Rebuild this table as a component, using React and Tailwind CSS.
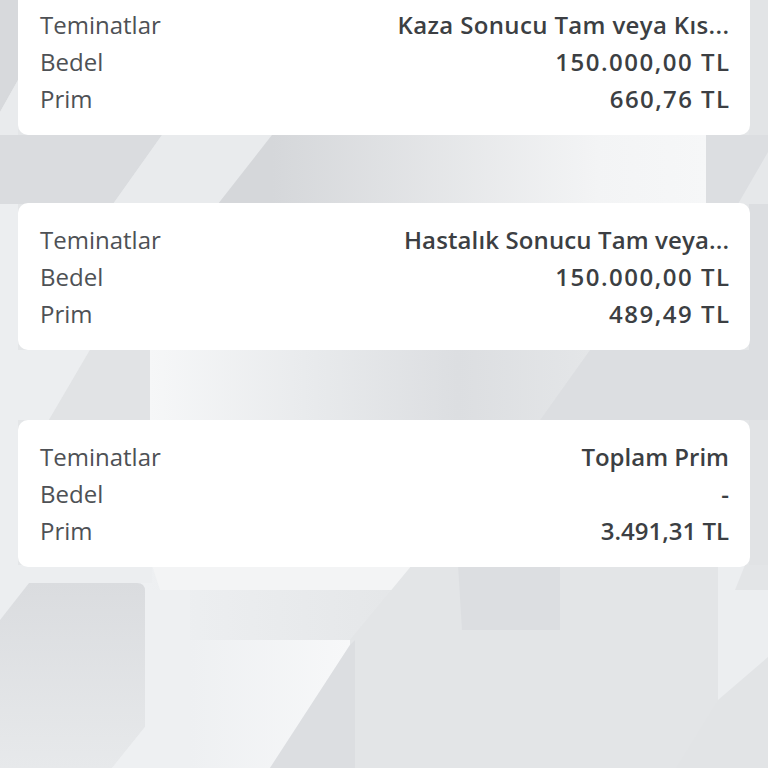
import React from 'react';

const cards = [
  {
    teminat: { text: 'Kaza Sonucu Tam veya Kıs...', cls: 'tracking-[0.35px] -mr-[0.35px]' },
    bedel: { text: '150.000,00 TL', cls: 'tracking-[1.5px] -mr-[1.5px]' },
    prim: { text: '660,76 TL', cls: 'tracking-[1.4px] -mr-[1.4px]' },
  },
  {
    teminat: { text: 'Hastalık Sonucu Tam veya...', cls: 'tracking-[0.12px] -mr-[0.12px]' },
    bedel: { text: '150.000,00 TL', cls: 'tracking-[1.5px] -mr-[1.5px]' },
    prim: { text: '489,49 TL', cls: 'tracking-[1.5px] -mr-[1.5px]' },
  },
  {
    teminat: { text: 'Toplam Prim', cls: '' },
    bedel: { text: '-', cls: '' },
    prim: { text: '3.491,31 TL', cls: '' },
  },
];

// decorative geometric backdrop
const Backdrop = () => (
  <svg className="absolute inset-0 w-full h-full" viewBox="0 0 768 768" preserveAspectRatio="none">
    <defs>
      <linearGradient id="g1" x1="272" x2="706" y1="0" y2="0" gradientUnits="userSpaceOnUse">
        <stop offset="0" stopColor="#d5d7da" />
        <stop offset="0.75" stopColor="#f3f4f5" />
        <stop offset="1" stopColor="#f6f7f8" />
      </linearGradient>
      <linearGradient id="g2" x1="150" x2="590" y1="0" y2="0" gradientUnits="userSpaceOnUse">
        <stop offset="0" stopColor="#f6f7f8" />
        <stop offset="0.35" stopColor="#e9ebed" />
        <stop offset="0.7" stopColor="#dcdee1" />
        <stop offset="1" stopColor="#e4e6e8" />
      </linearGradient>
      <linearGradient id="g3" x1="145" x2="412" y1="0" y2="0" gradientUnits="userSpaceOnUse">
        <stop offset="0" stopColor="#eef0f2" />
        <stop offset="1" stopColor="#e4e6e8" />
      </linearGradient>
      <linearGradient id="g4" x1="0" x2="0" y1="583" y2="768" gradientUnits="userSpaceOnUse">
        <stop offset="0" stopColor="#dadcdf" />
        <stop offset="1" stopColor="#e7e9eb" />
      </linearGradient>
      <linearGradient id="g5" x1="190" x2="350" y1="0" y2="0" gradientUnits="userSpaceOnUse">
        <stop offset="0" stopColor="#eef0f2" />
        <stop offset="1" stopColor="#f7f8f9" />
      </linearGradient>
    </defs>
    <rect width="768" height="768" fill="#e4e6e8" />
    {/* top strips */}
    <polygon points="0,0 18,0 18,80 0,112" fill="#d7d9dc" />
    <polygon points="0,112 18,80 18,135 0,135" fill="#e9ebed" />
    <polygon points="749,0 768,0 768,135 749,135" fill="#e2e4e6" />
    {/* first gap */}
    <polygon points="0,135 162,135 113,204 0,204" fill="#dadcdf" />
    <polygon points="162,135 272,135 218,204 113,204" fill="#e9ebed" />
    <polygon points="272,135 706,135 706,204 218,204" fill="url(#g1)" />
    <polygon points="706,135 768,135 768,204 706,204" fill="#dcdee1" />
    <polygon points="738,204 768,152 768,204" fill="#e6e8ea" />
    {/* middle strips */}
    <polygon points="0,204 18,204 18,420 0,420" fill="#eceef0" />
    <polygon points="749,204 768,204 768,420 749,420" fill="#dcdee1" />
    <polygon points="749,420 768,385 768,420" fill="#e6e8ea" />
    {/* second gap */}
    <polygon points="0,350 90,350 49,420 0,420" fill="#eceef0" />
    <polygon points="90,350 150,350 150,420 49,420" fill="#e1e3e5" />
    <polygon points="150,350 590,350 540,420 150,420" fill="url(#g2)" />
    <polygon points="590,350 768,350 768,420 540,420" fill="#dcdee1" />
    <polygon points="0,420 18,420 18,565 0,565" fill="#eceef0" />
    <polygon points="749,420 768,420 768,565 749,565" fill="#e1e3e5" />
    {/* bottom */}
    <polygon points="0,565 412,565 350,640 350,768 0,768" fill="url(#g3)" />
    <polygon points="0,565 152,565 152,583 29,583 0,620" fill="#eceef0" />
    <polygon points="152,565 412,565 400,590 160,590" fill="#f3f4f5" />
    <path d="M29,583 L137,583 Q145,583 145,591 L145,727 L112,768 L0,768 L0,620 Z" fill="url(#g4)" />
    <polygon points="145,590 190,590 190,768 112,768 145,727" fill="#eef0f2" />
    <polygon points="190,640 350,640 350,645 270,768 190,768" fill="url(#g5)" />
    <polygon points="350,645 355,640 355,768 270,768" fill="#dcdee1" />
    <polygon points="412,565 718,565 718,768 355,768 355,640 350,640" fill="#e3e5e7" />
    <polygon points="458,565 560,565 560,630 462,630" fill="#dcdee1" />
    <polygon points="718,565 768,565 768,768 718,768" fill="#eceef0" />
    <polygon points="745,565 768,565 768,590 735,590" fill="#e3e5e7" />
    <polygon points="768,657 768,768 676,768 718,700" fill="#e2e4e6" />
  </svg>
);

const Row = ({ label, value }) => (
  <div className="flex items-center justify-between h-[37px]">
    <span className="text-[24px] text-[#4e5155] whitespace-nowrap">{label}</span>
    <span className={`text-[24px] font-semibold text-[#3c3f43] whitespace-nowrap ${value.cls}`}>{value.text}</span>
  </div>
);

export default function App() {
  return (
    <div className="relative w-[768px] h-[768px] overflow-hidden" style={{ fontFamily: '"Open Sans", "Liberation Sans", sans-serif' }}>
      <Backdrop />
      <div className="relative flex flex-col px-[18px] -mt-[12px]">
        {cards.map((c, i) => (
          <div
            key={i}
            className={`bg-white rounded-[10px] pl-[22px] pr-[21px] pt-[18px] pb-[18px] ${i === 1 ? 'mt-[68px]' : ''} ${i === 2 ? 'mt-[70px]' : ''}`}
          >
            <Row label="Teminatlar" value={c.teminat} />
            <Row label="Bedel" value={c.bedel} />
            <Row label="Prim" value={c.prim} />
          </div>
        ))}
      </div>
    </div>
  );
}
